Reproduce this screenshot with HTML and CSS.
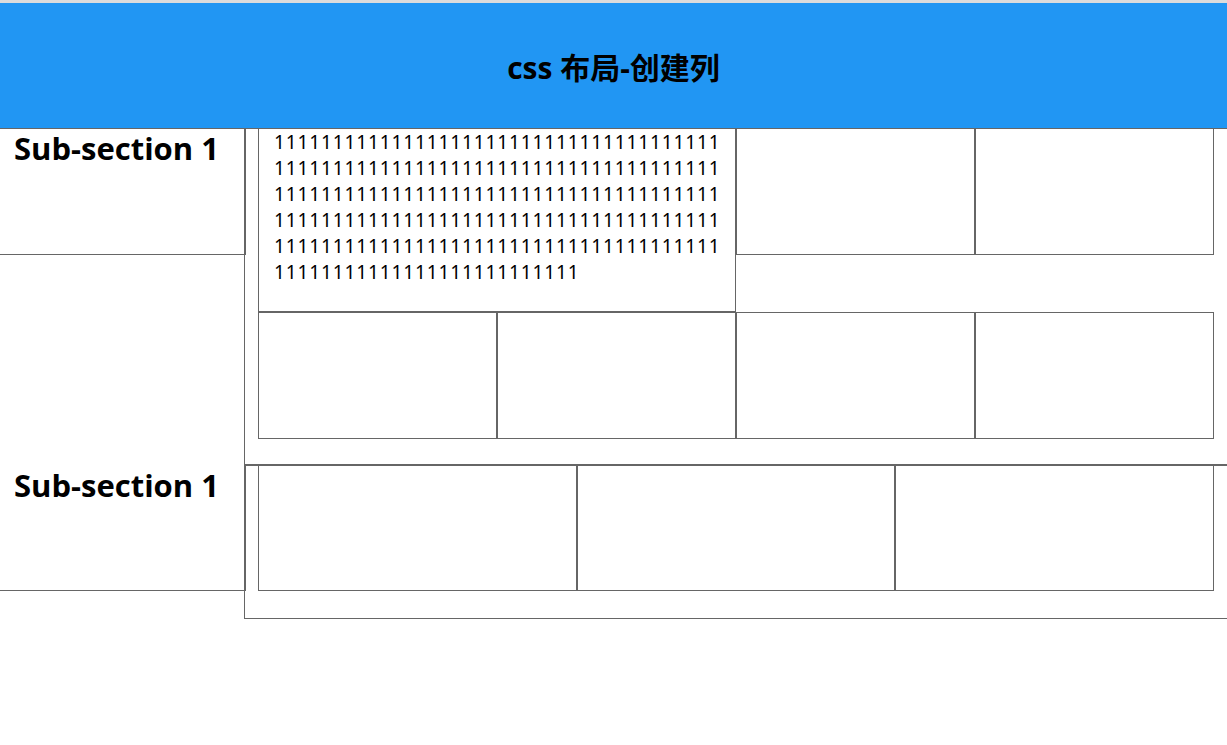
FILE: index.html
```html
<!DOCTYPE html>
<html lang="zh-CN">
<head>
<meta charset="utf-8">
<title>css 布局-创建列</title>
<link rel="stylesheet" href="styles.css">
</head>
<body>
<div class="header"><h1 class="title">css 布局-创建列</h1></div>
<div class="main">
  <div class="section section-a">
    <div class="side"><h2 class="side-title">Sub-section 1</h2></div>
    <div class="content">
      <div class="grid grid-4">
        <div class="box box-text">111111111111111111111111111111111111111111111111111111111111111111111111111111111111111111111111111111111111111111111111111111111111111111111111111111111111111111111111111111111111111111111111111111111111111111111111</div>
        <div class="box"></div>
        <div class="box"></div>
        <div class="box"></div>
        <div class="box"></div>
        <div class="box"></div>
        <div class="box"></div>
      </div>
    </div>
  </div>
  <div class="section section-b">
    <div class="side"><h2 class="side-title">Sub-section 1</h2></div>
    <div class="content">
      <div class="grid grid-3">
        <div class="box"></div>
        <div class="box"></div>
        <div class="box"></div>
      </div>
    </div>
  </div>
</div>
</body>
</html>
```

FILE: styles.css
```css
html, body {
  margin: 0;
  padding: 0;
}

body {
  overflow-x: hidden;
  background: #fff;
  color: #000;
  font-family: "Open Sans", "Noto Sans CJK SC", sans-serif;
}

.header {
  height: 125px;
  border-top: 3px solid #dcdcdc;
  border-bottom: 1px solid #666;
  background: #2196f3;
  display: flex;
  align-items: center;
  justify-content: center;
}

.title {
  margin: 0;
  padding-top: 5px;
  font-size: 30px;
  line-height: 30px;
  font-weight: 700;
}

.main {
  margin-top: -1px;
}

.section {
  display: flex;
  align-items: flex-start;
}

.side {
  box-sizing: border-box;
  width: 246px;
  flex-shrink: 0;
  padding: 2px 14px 0;
  border-right: 1px solid #666;
  border-bottom: 1px solid #666;
}

.section-a .side { height: 127px; }
.section-b .side { height: 126px; }

.side-title {
  margin: 0;
  font-size: 31px;
  line-height: 36px;
  font-weight: 700;
  white-space: nowrap;
}

.content {
  box-sizing: border-box;
  width: 984px;
  flex-shrink: 0;
  margin-left: -2px;
  border: 1px solid #666;
  padding: 0 13px 25px;
}

.section-b .content {
  padding-bottom: 27px;
}

.grid {
  display: grid;
  align-items: start;
  margin-top: -1px;
}

.grid-4 { grid-template-columns: repeat(4, 1fr); }
.grid-3 { grid-template-columns: repeat(3, 1fr); }

.box {
  box-sizing: border-box;
  border: 1px solid #666;
  height: 127px;
}

.section-b .box { height: 126px; }

.box-text {
  grid-column: span 2;
  height: auto;
  padding: 0 13px 26px 15px;
  font-family: "Noto Sans", sans-serif;
  font-size: 19px;
  line-height: 26px;
  letter-spacing: 0.88px;
  word-break: break-all;
}
```
